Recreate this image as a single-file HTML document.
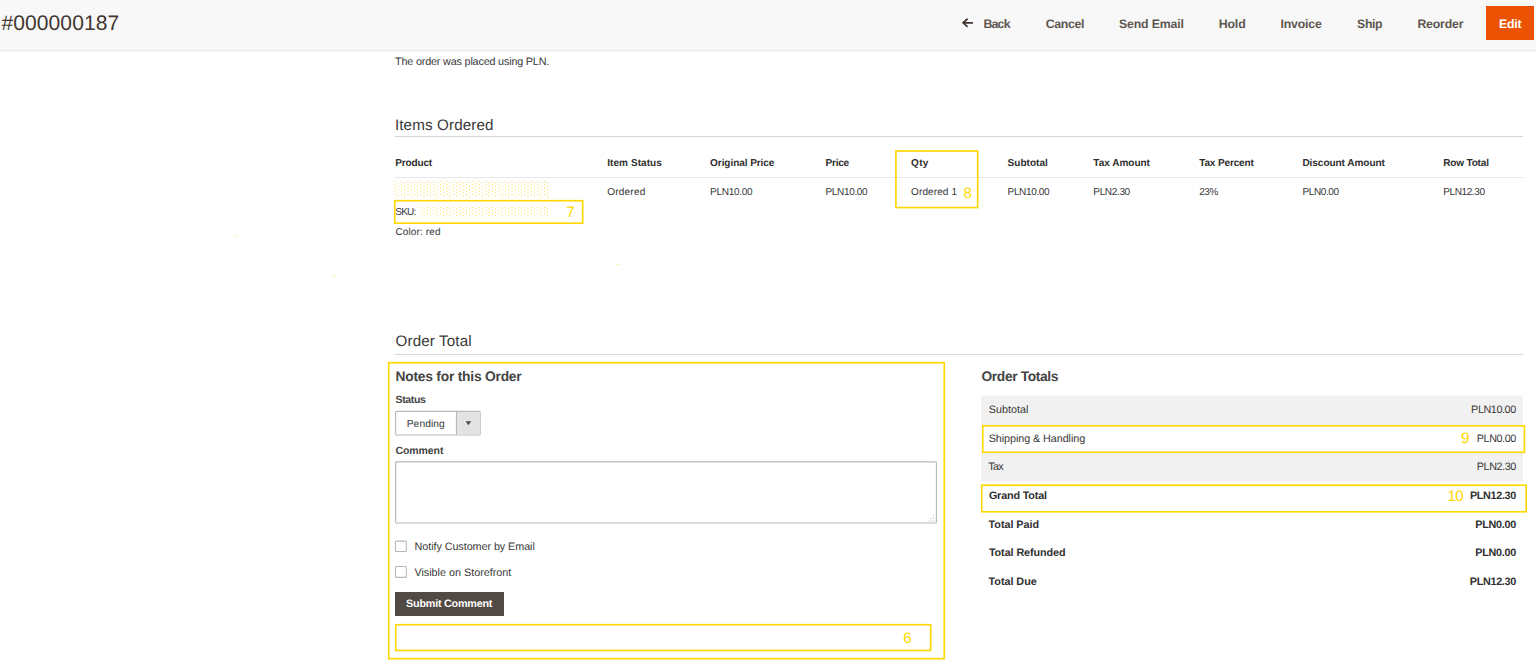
<!DOCTYPE html>
<html lang="en"><head><meta charset="utf-8"><title>#000000187 / Orders</title>
<style>
html,body{margin:0;padding:0;background:#fff;}
body{width:1536px;height:667px;position:relative;overflow:hidden;font-family:"Liberation Sans",sans-serif;}
.t{position:absolute;margin:0;padding:0;font-weight:400;text-decoration:none;display:block;text-rendering:geometricPrecision;white-space:nowrap;line-height:20px;font-family:"Liberation Sans",sans-serif;}
.b{position:absolute;box-sizing:border-box;}

</style></head>
<body>
<div class="b" style="left:0;top:0;width:1536px;height:50px;background:#f8f8f8;"></div>
<div class="b" style="left:0;top:50px;width:1536px;height:1px;background:#ebebeb;"></div>
<div class="b" style="left:0;top:51px;width:1536px;height:1px;background:#f7f7f7;"></div>
<svg class="b" style="left:961px;top:17px;" width="13" height="12" viewBox="0 0 13 12"><path d="M12 5.8H2.2M6.6 1.75L2.1 5.8L6.6 9.85" fill="none" stroke="#41362f" stroke-width="1.7"/></svg>
<div class="b" style="left:1486.2px;top:5.9px;width:48px;height:33.9px;background:#eb5202;"></div>
<!-- section lines -->
<div class="b" style="left:395px;top:136px;width:1128px;height:1px;background:#d6d6d6;"></div>
<div class="b" style="left:395px;top:177px;width:1128px;height:1px;background:#e7e7e7;"></div>
<div class="b" style="left:395px;top:354px;width:1128px;height:1px;background:#d6d6d6;"></div>
<!-- form controls -->
<svg class="b" style="left:0;top:0;" width="1536" height="667" viewBox="0 0 1536 667">
<rect x="395.65" y="411.35" width="84.6" height="23.65" rx="1" fill="#ffffff" stroke="#b8b8b8" stroke-width="1.1"/>
<rect x="456.9" y="411.9" width="23.3" height="22.6" fill="#e3e3e3"/>
<line x1="456.45" y1="411.9" x2="456.45" y2="434.5" stroke="#b8b8b8" stroke-width="1.1"/>
<path d="M465.6 421.3H471.2L468.4 425.3Z" fill="#514943"/>
<rect x="395.6" y="461.9" width="540.85" height="61.1" rx="1" fill="#ffffff" stroke="#b8b8b8" stroke-width="1.2"/>
<g fill="#b8b8b8"><rect x="933" y="515.2" width="1" height="1"/><rect x="930.6" y="517.9" width="1" height="1"/><rect x="933" y="517.9" width="1" height="1"/><rect x="927.8" y="520.6" width="1" height="1"/><rect x="930.4" y="520.6" width="1" height="1"/><rect x="933" y="520.6" width="1" height="1"/></g>
<rect x="981" y="395.6" width="541.8" height="29.6" fill="#f1f1f1"/>
<rect x="981" y="452.9" width="541.8" height="28.8" fill="#f1f1f1"/>
<rect x="395.45" y="541.15" width="10.9" height="10.4" rx="1" fill="#ffffff" stroke="#b8b8b8" stroke-width="1.1"/>
<rect x="395.45" y="566.55" width="10.9" height="10.8" rx="1" fill="#ffffff" stroke="#b8b8b8" stroke-width="1.1"/>
</svg>
<!-- submit -->
<div class="b" style="left:395px;top:592px;width:108.6px;height:24px;background:#514943;"></div>
<!-- yellow annotation boxes -->
<svg class="b" style="left:0;top:0;" width="1536" height="667" viewBox="0 0 1536 667">
<path fill="#ffcc00" fill-opacity=".68" d="M394.5 181h1v1h-1zM401 181h1v1h-1zM407.5 181h1v1h-1zM414 181h1v1h-1zM420.5 181h1v1h-1zM427 181h1v1h-1zM433.5 181h1v1h-1zM440 181h1v1h-1zM446.5 181h1v1h-1zM453 181h1v1h-1zM459.5 181h1v1h-1zM466 181h1v1h-1zM472.5 181h1v1h-1zM479 181h1v1h-1zM485.5 181h1v1h-1zM492 181h1v1h-1zM498.5 181h1v1h-1zM505 181h1v1h-1zM511.5 181h1v1h-1zM518 181h1v1h-1zM524.5 181h1v1h-1zM531 181h1v1h-1zM537.5 181h1v1h-1zM544 181h1v1h-1zM397.5 182.6h1v1h-1zM404 182.6h1v1h-1zM410.5 182.6h1v1h-1zM417 182.6h1v1h-1zM423.5 182.6h1v1h-1zM430 182.6h1v1h-1zM436.5 182.6h1v1h-1zM443 182.6h1v1h-1zM449.5 182.6h1v1h-1zM456 182.6h1v1h-1zM462.5 182.6h1v1h-1zM469 182.6h1v1h-1zM475.5 182.6h1v1h-1zM482 182.6h1v1h-1zM488.5 182.6h1v1h-1zM495 182.6h1v1h-1zM501.5 182.6h1v1h-1zM508 182.6h1v1h-1zM514.5 182.6h1v1h-1zM521 182.6h1v1h-1zM527.5 182.6h1v1h-1zM534 182.6h1v1h-1zM540.5 182.6h1v1h-1zM547 182.6h1v1h-1zM394.5 184.25h1v1h-1zM401 184.25h1v1h-1zM407.5 184.25h1v1h-1zM414 184.25h1v1h-1zM420.5 184.25h1v1h-1zM427 184.25h1v1h-1zM433.5 184.25h1v1h-1zM440 184.25h1v1h-1zM446.5 184.25h1v1h-1zM453 184.25h1v1h-1zM459.5 184.25h1v1h-1zM466 184.25h1v1h-1zM472.5 184.25h1v1h-1zM479 184.25h1v1h-1zM485.5 184.25h1v1h-1zM492 184.25h1v1h-1zM498.5 184.25h1v1h-1zM505 184.25h1v1h-1zM511.5 184.25h1v1h-1zM518 184.25h1v1h-1zM524.5 184.25h1v1h-1zM531 184.25h1v1h-1zM537.5 184.25h1v1h-1zM544 184.25h1v1h-1zM397.5 185.85h1v1h-1zM404 185.85h1v1h-1zM410.5 185.85h1v1h-1zM417 185.85h1v1h-1zM423.5 185.85h1v1h-1zM430 185.85h1v1h-1zM436.5 185.85h1v1h-1zM443 185.85h1v1h-1zM449.5 185.85h1v1h-1zM456 185.85h1v1h-1zM462.5 185.85h1v1h-1zM469 185.85h1v1h-1zM475.5 185.85h1v1h-1zM482 185.85h1v1h-1zM488.5 185.85h1v1h-1zM495 185.85h1v1h-1zM501.5 185.85h1v1h-1zM508 185.85h1v1h-1zM514.5 185.85h1v1h-1zM521 185.85h1v1h-1zM527.5 185.85h1v1h-1zM534 185.85h1v1h-1zM540.5 185.85h1v1h-1zM547 185.85h1v1h-1zM394.5 187.5h1v1h-1zM401 187.5h1v1h-1zM407.5 187.5h1v1h-1zM414 187.5h1v1h-1zM420.5 187.5h1v1h-1zM427 187.5h1v1h-1zM433.5 187.5h1v1h-1zM440 187.5h1v1h-1zM446.5 187.5h1v1h-1zM453 187.5h1v1h-1zM459.5 187.5h1v1h-1zM466 187.5h1v1h-1zM472.5 187.5h1v1h-1zM479 187.5h1v1h-1zM485.5 187.5h1v1h-1zM492 187.5h1v1h-1zM498.5 187.5h1v1h-1zM505 187.5h1v1h-1zM511.5 187.5h1v1h-1zM518 187.5h1v1h-1zM524.5 187.5h1v1h-1zM531 187.5h1v1h-1zM537.5 187.5h1v1h-1zM544 187.5h1v1h-1zM397.5 189.1h1v1h-1zM404 189.1h1v1h-1zM410.5 189.1h1v1h-1zM417 189.1h1v1h-1zM423.5 189.1h1v1h-1zM430 189.1h1v1h-1zM436.5 189.1h1v1h-1zM443 189.1h1v1h-1zM449.5 189.1h1v1h-1zM456 189.1h1v1h-1zM462.5 189.1h1v1h-1zM469 189.1h1v1h-1zM475.5 189.1h1v1h-1zM482 189.1h1v1h-1zM488.5 189.1h1v1h-1zM495 189.1h1v1h-1zM501.5 189.1h1v1h-1zM508 189.1h1v1h-1zM514.5 189.1h1v1h-1zM521 189.1h1v1h-1zM527.5 189.1h1v1h-1zM534 189.1h1v1h-1zM540.5 189.1h1v1h-1zM547 189.1h1v1h-1zM394.5 190.75h1v1h-1zM401 190.75h1v1h-1zM407.5 190.75h1v1h-1zM414 190.75h1v1h-1zM420.5 190.75h1v1h-1zM427 190.75h1v1h-1zM433.5 190.75h1v1h-1zM440 190.75h1v1h-1zM446.5 190.75h1v1h-1zM453 190.75h1v1h-1zM459.5 190.75h1v1h-1zM466 190.75h1v1h-1zM472.5 190.75h1v1h-1zM479 190.75h1v1h-1zM485.5 190.75h1v1h-1zM492 190.75h1v1h-1zM498.5 190.75h1v1h-1zM505 190.75h1v1h-1zM511.5 190.75h1v1h-1zM518 190.75h1v1h-1zM524.5 190.75h1v1h-1zM531 190.75h1v1h-1zM537.5 190.75h1v1h-1zM544 190.75h1v1h-1zM397.5 192.35h1v1h-1zM404 192.35h1v1h-1zM410.5 192.35h1v1h-1zM417 192.35h1v1h-1zM423.5 192.35h1v1h-1zM430 192.35h1v1h-1zM436.5 192.35h1v1h-1zM443 192.35h1v1h-1zM449.5 192.35h1v1h-1zM456 192.35h1v1h-1zM462.5 192.35h1v1h-1zM469 192.35h1v1h-1zM475.5 192.35h1v1h-1zM482 192.35h1v1h-1zM488.5 192.35h1v1h-1zM495 192.35h1v1h-1zM501.5 192.35h1v1h-1zM508 192.35h1v1h-1zM514.5 192.35h1v1h-1zM521 192.35h1v1h-1zM527.5 192.35h1v1h-1zM534 192.35h1v1h-1zM540.5 192.35h1v1h-1zM547 192.35h1v1h-1zM394.5 194h1v1h-1zM401 194h1v1h-1zM407.5 194h1v1h-1zM414 194h1v1h-1zM420.5 194h1v1h-1zM427 194h1v1h-1zM433.5 194h1v1h-1zM440 194h1v1h-1zM446.5 194h1v1h-1zM453 194h1v1h-1zM459.5 194h1v1h-1zM466 194h1v1h-1zM472.5 194h1v1h-1zM479 194h1v1h-1zM485.5 194h1v1h-1zM492 194h1v1h-1zM498.5 194h1v1h-1zM505 194h1v1h-1zM511.5 194h1v1h-1zM518 194h1v1h-1zM524.5 194h1v1h-1zM531 194h1v1h-1zM537.5 194h1v1h-1zM544 194h1v1h-1zM397.5 195.6h1v1h-1zM404 195.6h1v1h-1zM410.5 195.6h1v1h-1zM417 195.6h1v1h-1zM423.5 195.6h1v1h-1zM430 195.6h1v1h-1zM436.5 195.6h1v1h-1zM443 195.6h1v1h-1zM449.5 195.6h1v1h-1zM456 195.6h1v1h-1zM462.5 195.6h1v1h-1zM469 195.6h1v1h-1zM475.5 195.6h1v1h-1zM482 195.6h1v1h-1zM488.5 195.6h1v1h-1zM495 195.6h1v1h-1zM501.5 195.6h1v1h-1zM508 195.6h1v1h-1zM514.5 195.6h1v1h-1zM521 195.6h1v1h-1zM527.5 195.6h1v1h-1zM534 195.6h1v1h-1zM540.5 195.6h1v1h-1zM547 195.6h1v1h-1zM420.5 207h1v1h-1zM427 207h1v1h-1zM433.5 207h1v1h-1zM440 207h1v1h-1zM446.5 207h1v1h-1zM453 207h1v1h-1zM459.5 207h1v1h-1zM466 207h1v1h-1zM472.5 207h1v1h-1zM479 207h1v1h-1zM485.5 207h1v1h-1zM492 207h1v1h-1zM498.5 207h1v1h-1zM505 207h1v1h-1zM511.5 207h1v1h-1zM518 207h1v1h-1zM524.5 207h1v1h-1zM531 207h1v1h-1zM537.5 207h1v1h-1zM544 207h1v1h-1zM423.5 208.6h1v1h-1zM430 208.6h1v1h-1zM436.5 208.6h1v1h-1zM443 208.6h1v1h-1zM449.5 208.6h1v1h-1zM456 208.6h1v1h-1zM462.5 208.6h1v1h-1zM469 208.6h1v1h-1zM475.5 208.6h1v1h-1zM482 208.6h1v1h-1zM488.5 208.6h1v1h-1zM495 208.6h1v1h-1zM501.5 208.6h1v1h-1zM508 208.6h1v1h-1zM514.5 208.6h1v1h-1zM521 208.6h1v1h-1zM527.5 208.6h1v1h-1zM534 208.6h1v1h-1zM540.5 208.6h1v1h-1zM547 208.6h1v1h-1zM420.5 210.25h1v1h-1zM427 210.25h1v1h-1zM433.5 210.25h1v1h-1zM440 210.25h1v1h-1zM446.5 210.25h1v1h-1zM453 210.25h1v1h-1zM459.5 210.25h1v1h-1zM466 210.25h1v1h-1zM472.5 210.25h1v1h-1zM479 210.25h1v1h-1zM485.5 210.25h1v1h-1zM492 210.25h1v1h-1zM498.5 210.25h1v1h-1zM505 210.25h1v1h-1zM511.5 210.25h1v1h-1zM518 210.25h1v1h-1zM524.5 210.25h1v1h-1zM531 210.25h1v1h-1zM537.5 210.25h1v1h-1zM544 210.25h1v1h-1zM423.5 211.85h1v1h-1zM430 211.85h1v1h-1zM436.5 211.85h1v1h-1zM443 211.85h1v1h-1zM449.5 211.85h1v1h-1zM456 211.85h1v1h-1zM462.5 211.85h1v1h-1zM469 211.85h1v1h-1zM475.5 211.85h1v1h-1zM482 211.85h1v1h-1zM488.5 211.85h1v1h-1zM495 211.85h1v1h-1zM501.5 211.85h1v1h-1zM508 211.85h1v1h-1zM514.5 211.85h1v1h-1zM521 211.85h1v1h-1zM527.5 211.85h1v1h-1zM534 211.85h1v1h-1zM540.5 211.85h1v1h-1zM547 211.85h1v1h-1zM420.5 213.5h1v1h-1zM427 213.5h1v1h-1zM433.5 213.5h1v1h-1zM440 213.5h1v1h-1zM446.5 213.5h1v1h-1zM453 213.5h1v1h-1zM459.5 213.5h1v1h-1zM466 213.5h1v1h-1zM472.5 213.5h1v1h-1zM479 213.5h1v1h-1zM485.5 213.5h1v1h-1zM492 213.5h1v1h-1zM498.5 213.5h1v1h-1zM505 213.5h1v1h-1zM511.5 213.5h1v1h-1zM518 213.5h1v1h-1zM524.5 213.5h1v1h-1zM531 213.5h1v1h-1zM537.5 213.5h1v1h-1zM544 213.5h1v1h-1zM423.5 215.1h1v1h-1zM430 215.1h1v1h-1zM436.5 215.1h1v1h-1zM443 215.1h1v1h-1zM449.5 215.1h1v1h-1zM456 215.1h1v1h-1zM462.5 215.1h1v1h-1zM469 215.1h1v1h-1zM475.5 215.1h1v1h-1zM482 215.1h1v1h-1zM488.5 215.1h1v1h-1zM495 215.1h1v1h-1zM501.5 215.1h1v1h-1zM508 215.1h1v1h-1zM514.5 215.1h1v1h-1zM521 215.1h1v1h-1zM527.5 215.1h1v1h-1zM534 215.1h1v1h-1zM540.5 215.1h1v1h-1zM547 215.1h1v1h-1z"/>
<g fill="#ffd700" fill-opacity=".5"><rect x="234.2" y="234.9" width="1.8" height="0.9"/><rect x="334.05" y="275.1" width="0.9" height="1.8"/><rect x="617.1" y="264.05" width="1.8" height="0.9"/></g>
<rect x="394.72" y="200.72" width="187.95" height="22.45" fill="none" stroke="#ffd700" stroke-width="1.65"/>
<rect x="895.93" y="151.02" width="81.75" height="56.55" fill="none" stroke="#ffd700" stroke-width="1.65"/>
<rect x="388.72" y="362.72" width="555.55" height="295.95" fill="none" stroke="#ffd700" stroke-width="1.65"/>
<rect x="395.72" y="624.73" width="534.95" height="25.75" fill="none" stroke="#ffd700" stroke-width="1.65"/>
<rect x="982.73" y="425.82" width="541.65" height="26.45" fill="#ffffff" stroke="#ffd700" stroke-width="1.65"/>
<rect x="981.73" y="485.22" width="544.45" height="26.55" fill="none" stroke="#ffd700" stroke-width="1.65"/>
</svg>

<div id="texts">
<header class="page-actions">
<h1 class="t" style="left:1.40px;top:13.85px;font-size:21.0px;letter-spacing:0.110px;color:#41362f;">#000000187</h1>
<a class="t" style="left:983.40px;top:13.75px;font-size:12.3px;letter-spacing:-0.753px;color:#5d5650;font-weight:700;">Back</a>
<a class="t" style="left:1045.70px;top:13.75px;font-size:12.3px;letter-spacing:-0.302px;color:#5d5650;font-weight:700;">Cancel</a>
<a class="t" style="left:1119.10px;top:13.75px;font-size:12.3px;letter-spacing:-0.175px;color:#5d5650;font-weight:700;">Send Email</a>
<a class="t" style="left:1218.70px;top:13.75px;font-size:12.3px;letter-spacing:-0.103px;color:#5d5650;font-weight:700;">Hold</a>
<a class="t" style="left:1280.50px;top:13.75px;font-size:12.3px;letter-spacing:-0.172px;color:#5d5650;font-weight:700;">Invoice</a>
<a class="t" style="left:1357.10px;top:13.75px;font-size:12.3px;letter-spacing:-0.377px;color:#5d5650;font-weight:700;">Ship</a>
<a class="t" style="left:1417.40px;top:13.75px;font-size:12.3px;letter-spacing:-0.178px;color:#5d5650;font-weight:700;">Reorder</a>
<a class="t" style="left:1499.00px;top:13.75px;font-size:12.3px;letter-spacing:-0.210px;color:#ffffff;font-weight:700;">Edit</a>
</header>
<main>
<section class="items-ordered">
<span class="t" style="left:395.10px;top:51.85px;font-size:10.8px;letter-spacing:-0.181px;color:#383838;">The order was placed using PLN.</span>
<h2 class="t" style="left:394.90px;top:115.95px;font-size:15.2px;letter-spacing:0.132px;color:#383838;">Items Ordered</h2>
<span class="t" style="left:395.30px;top:153.85px;font-size:10.05px;letter-spacing:-0.185px;color:#303030;font-weight:700;">Product</span>
<span class="t" style="left:607.20px;top:153.85px;font-size:10.05px;letter-spacing:0.053px;color:#303030;font-weight:700;">Item Status</span>
<span class="t" style="left:710.10px;top:153.85px;font-size:10.05px;letter-spacing:-0.080px;color:#303030;font-weight:700;">Original Price</span>
<span class="t" style="left:825.50px;top:153.85px;font-size:10.05px;letter-spacing:-0.222px;color:#303030;font-weight:700;">Price</span>
<span class="t" style="left:911.10px;top:153.85px;font-size:10.05px;letter-spacing:0.220px;color:#303030;font-weight:700;">Qty</span>
<span class="t" style="left:1007.60px;top:153.85px;font-size:10.05px;letter-spacing:0.001px;color:#303030;font-weight:700;">Subtotal</span>
<span class="t" style="left:1093.30px;top:153.85px;font-size:10.05px;letter-spacing:-0.032px;color:#303030;font-weight:700;">Tax Amount</span>
<span class="t" style="left:1199.20px;top:153.85px;font-size:10.05px;letter-spacing:-0.157px;color:#303030;font-weight:700;">Tax Percent</span>
<span class="t" style="left:1302.40px;top:153.85px;font-size:10.05px;letter-spacing:-0.057px;color:#303030;font-weight:700;">Discount Amount</span>
<span class="t" style="left:1443.20px;top:153.85px;font-size:10.05px;letter-spacing:-0.183px;color:#303030;font-weight:700;">Row Total</span>
<span class="t" style="left:607.20px;top:182.55px;font-size:10.05px;letter-spacing:0.205px;color:#383838;">Ordered</span>
<span class="t" style="left:710.10px;top:182.55px;font-size:10.05px;letter-spacing:-0.328px;color:#383838;">PLN10.00</span>
<span class="t" style="left:825.50px;top:182.55px;font-size:10.05px;letter-spacing:-0.357px;color:#383838;">PLN10.00</span>
<span class="t" style="left:911.10px;top:182.55px;font-size:10.05px;letter-spacing:0.082px;color:#383838;">Ordered 1</span>
<span class="t" style="left:1007.60px;top:182.55px;font-size:10.05px;letter-spacing:-0.385px;color:#383838;">PLN10.00</span>
<span class="t" style="left:1093.30px;top:182.55px;font-size:10.05px;letter-spacing:-0.368px;color:#383838;">PLN2.30</span>
<span class="t" style="left:1199.20px;top:182.55px;font-size:10.05px;letter-spacing:-0.438px;color:#383838;">23%</span>
<span class="t" style="left:1302.40px;top:182.55px;font-size:10.05px;letter-spacing:-0.402px;color:#383838;">PLN0.00</span>
<span class="t" style="left:1443.20px;top:182.55px;font-size:10.05px;letter-spacing:-0.414px;color:#383838;">PLN12.30</span>
<span class="t" style="left:395.30px;top:203.05px;font-size:10.05px;letter-spacing:-0.853px;color:#383838;">SKU:</span>
<span class="t" style="left:395.40px;top:223.35px;font-size:10.05px;letter-spacing:0.119px;color:#383838;">Color: red</span>
</section>
<section class="order-notes">
<h2 class="t" style="left:395.50px;top:332.05px;font-size:15.2px;letter-spacing:0.133px;color:#383838;">Order Total</h2>
<h3 class="t" style="left:395.50px;top:366.75px;font-size:13.8px;letter-spacing:-0.219px;color:#444444;font-weight:700;">Notes for this Order</h3>
<label class="t" style="left:395.50px;top:390.25px;font-size:10.5px;letter-spacing:-0.330px;color:#444444;font-weight:700;">Status</label>
<span class="t" style="left:406.70px;top:414.85px;font-size:10.3px;letter-spacing:0.056px;color:#383838;">Pending</span>
<label class="t" style="left:395.40px;top:440.75px;font-size:10.5px;letter-spacing:-0.070px;color:#444444;font-weight:700;">Comment</label>
<label class="t" style="left:414.60px;top:537.15px;font-size:10.8px;letter-spacing:-0.069px;color:#383838;">Notify Customer by Email</label>
<label class="t" style="left:414.40px;top:563.35px;font-size:10.8px;letter-spacing:-0.006px;color:#383838;">Visible on Storefront</label>
<span class="t" style="left:406.10px;top:594.25px;font-size:10.8px;letter-spacing:-0.237px;color:#ffffff;font-weight:700;">Submit Comment</span>
</section>
<section class="order-totals">
<h3 class="t" style="left:981.50px;top:366.85px;font-size:13.8px;letter-spacing:-0.376px;color:#444444;font-weight:700;">Order Totals</h3>
<span class="t" style="left:988.70px;top:400.25px;font-size:10.8px;letter-spacing:0.011px;color:#383838;">Subtotal</span>
<span class="t" style="left:988.70px;top:428.65px;font-size:10.8px;letter-spacing:-0.074px;color:#383838;">Shipping &amp; Handling</span>
<span class="t" style="left:988.30px;top:457.15px;font-size:10.8px;letter-spacing:-0.751px;color:#383838;">Tax</span>
<span class="t" style="left:988.90px;top:486.15px;font-size:10.8px;letter-spacing:-0.168px;color:#303030;font-weight:700;">Grand Total</span>
<span class="t" style="left:988.60px;top:514.75px;font-size:10.8px;letter-spacing:-0.044px;color:#303030;font-weight:700;">Total Paid</span>
<span class="t" style="left:988.90px;top:543.25px;font-size:10.8px;letter-spacing:-0.083px;color:#303030;font-weight:700;">Total Refunded</span>
<span class="t" style="left:988.60px;top:571.65px;font-size:10.8px;letter-spacing:-0.035px;color:#303030;font-weight:700;">Total Due</span>
<span class="t" style="left:1471.10px;top:400.25px;font-size:10.8px;letter-spacing:-0.417px;color:#383838;">PLN10.00</span>
<span class="t" style="left:1476.80px;top:428.65px;font-size:10.8px;letter-spacing:-0.435px;color:#383838;">PLN0.00</span>
<span class="t" style="left:1476.80px;top:457.15px;font-size:10.8px;letter-spacing:-0.435px;color:#383838;">PLN2.30</span>
<span class="t" style="left:1470.00px;top:486.15px;font-size:10.8px;letter-spacing:-0.344px;color:#303030;font-weight:700;">PLN12.30</span>
<span class="t" style="left:1475.30px;top:514.75px;font-size:10.8px;letter-spacing:-0.284px;color:#303030;font-weight:700;">PLN0.00</span>
<span class="t" style="left:1475.30px;top:543.25px;font-size:10.8px;letter-spacing:-0.284px;color:#303030;font-weight:700;">PLN0.00</span>
<span class="t" style="left:1469.80px;top:571.65px;font-size:10.8px;letter-spacing:-0.315px;color:#303030;font-weight:700;">PLN12.30</span>
</section>
</main>
<aside class="annotations">
<span class="t" style="left:566.20px;top:202.55px;font-size:15.2px;letter-spacing:0.000px;color:#ffd700;">7</span>
<span class="t" style="left:963.60px;top:183.85px;font-size:15.2px;letter-spacing:0.000px;color:#ffd700;">8</span>
<span class="t" style="left:903.30px;top:629.25px;font-size:15.2px;letter-spacing:0.000px;color:#ffd700;">6</span>
<span class="t" style="left:1461.10px;top:429.25px;font-size:15.2px;letter-spacing:0.000px;color:#ffd700;">9</span>
<span class="t" style="left:1447.40px;top:486.55px;font-size:15.2px;letter-spacing:-0.647px;color:#ffd700;">10</span>
</aside>
</div>
</body></html>
